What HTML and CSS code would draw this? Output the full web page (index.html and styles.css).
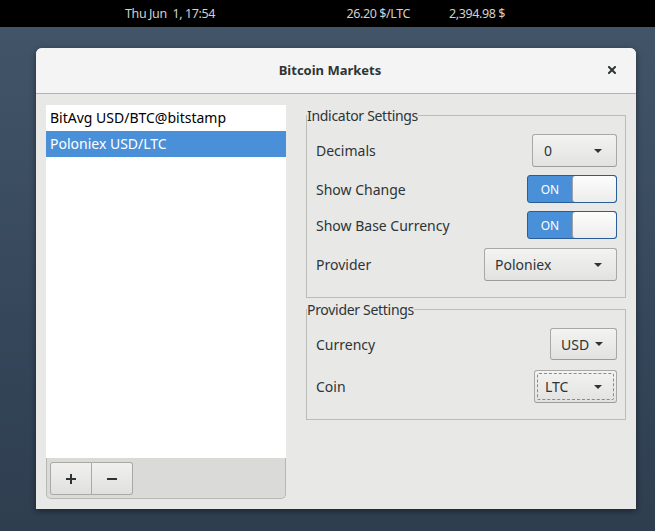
FILE: index.html
```html
<!DOCTYPE html>
<html lang="en">
<head>
<meta charset="utf-8">
<title>Bitcoin Markets</title>
<link rel="stylesheet" href="styles.css">
</head>
<body>
<div class="topbar">
  <span class="clock">Thu Jun  1, 17:54</span>
  <span class="ticker ticker-ltc">26.20 $/LTC</span>
  <span class="ticker">2,394.98 $</span>
</div>
<div class="desktop">
  <div class="dialog">
    <header class="titlebar">
      <span class="title">Bitcoin Markets</span>
      <button class="close" aria-label="Close">
        <svg width="8" height="8" viewBox="0 0 8 8"><path d="M1 1L7 7M7 1L1 7" stroke="#2e3436" stroke-width="2" stroke-linecap="square" fill="none"/></svg>
      </button>
    </header>
    <div class="content">
      <div class="sidebar">
        <ul class="list">
          <li class="row">BitAvg USD/BTC@bitstamp</li>
          <li class="row selected">Poloniex USD/LTC</li>
        </ul>
        <div class="toolbar">
          <div class="btn-group">
            <button class="tool-btn" aria-label="Add">
              <svg width="10" height="10" viewBox="0 0 10 10"><path d="M0 5H10M5 0V10" stroke="#2e3436" stroke-width="2" fill="none"/></svg>
            </button>
            <button class="tool-btn" aria-label="Remove">
              <svg width="10" height="10" viewBox="0 0 10 10"><path d="M0 5H10" stroke="#2e3436" stroke-width="2" fill="none"/></svg>
            </button>
          </div>
        </div>
      </div>
      <div class="settings">
        <fieldset class="frame frame-indicator">
          <legend>Indicator Settings</legend>
          <div class="setting-row">
            <span class="label">Decimals</span>
            <button class="combo combo-decimals"><span>0</span><svg class="arrow" width="8" height="4" viewBox="0 0 8 4"><path d="M0 0H8L4 4Z" fill="#2e3436"/></svg></button>
          </div>
          <div class="setting-row">
            <span class="label">Show Change</span>
            <div class="switch"><span class="switch-on">ON</span><span class="knob"></span></div>
          </div>
          <div class="setting-row">
            <span class="label">Show Base Currency</span>
            <div class="switch"><span class="switch-on">ON</span><span class="knob"></span></div>
          </div>
          <div class="setting-row row-provider">
            <span class="label">Provider</span>
            <button class="combo combo-provider"><span>Poloniex</span><svg class="arrow" width="8" height="4" viewBox="0 0 8 4"><path d="M0 0H8L4 4Z" fill="#2e3436"/></svg></button>
          </div>
        </fieldset>
        <fieldset class="frame frame-provider">
          <legend>Provider Settings</legend>
          <div class="setting-row">
            <span class="label">Currency</span>
            <button class="combo combo-currency"><span>USD</span><svg class="arrow" width="8" height="4" viewBox="0 0 8 4"><path d="M0 0H8L4 4Z" fill="#2e3436"/></svg></button>
          </div>
          <div class="setting-row row-coin">
            <span class="label">Coin</span>
            <button class="combo combo-coin focused"><span>LTC</span><svg class="arrow" width="8" height="4" viewBox="0 0 8 4"><path d="M0 0H8L4 4Z" fill="#2e3436"/></svg></button>
          </div>
        </fieldset>
      </div>
    </div>
  </div>
</div>
</body>
</html>
```
FILE: styles.css
```css
* { box-sizing: border-box; }

html, body {
  margin: 0;
  width: 655px;
  height: 531px;
  overflow: hidden;
}

body {
  font-family: "Noto Sans", "Open Sans", sans-serif;
  font-size: 14px;
  color: #2e3436;
  background: #000;
  display: flex;
  flex-direction: column;
}

.topbar {
  height: 27px;
  flex: none;
  background: #000;
  color: #d0d0d0;
  display: flex;
  align-items: center;
  padding: 0 150px 1px 125px;
  font-size: 12.5px;
  letter-spacing: -0.4px;
}

.clock { white-space: pre; margin-right: auto; }
.ticker-ltc { margin-right: 39px; }

.desktop {
  flex: 1;
  background: linear-gradient(#425568, #35465a 60%, #2f3e4f);
  padding: 21px 0 0 36px;
}

.dialog {
  width: 600px;
  height: 461px;
  display: flex;
  flex-direction: column;
  background: #e8e8e7;
  border-radius: 6px 6px 0 0;
  box-shadow: 0 2px 6px rgba(0, 0, 0, 0.45);
}

.titlebar {
  height: 46px;
  flex: none;
  display: grid;
  grid-template-columns: 1fr auto 1fr;
  align-items: center;
  background: #f4f4f4;
  border-bottom: 1px solid #b3b3b0;
  border-radius: 6px 6px 0 0;
  padding: 0 12px 1px 0;
}

.title {
  grid-column: 2;
  font-size: 13px;
  font-weight: bold;
  color: #2e3436;
}

.close {
  grid-column: 3;
  justify-self: end;
  width: 24px;
  height: 24px;
  border: 0;
  padding: 0;
  background: transparent;
  display: flex;
  align-items: center;
  justify-content: center;
}

.content {
  flex: 1;
  display: flex;
  gap: 20px;
  padding: 11px 10px 10px 10px;
}

.sidebar {
  width: 240px;
  display: flex;
  flex-direction: column;
}

.list {
  flex: 1;
  margin: 0;
  padding: 0;
  list-style: none;
  background: #fff;
}

.row {
  height: 26px;
  line-height: 26px;
  padding-left: 4px;
  color: #000;
}

.row.selected {
  background: #4a90d9;
  color: #fff;
}

.toolbar {
  height: 41px;
  flex: none;
  background: #dadad9;
  border: 1px solid #b8b8b5;
  border-top: 0;
  border-radius: 0 0 5px 5px;
  padding: 4px 3px;
}

.btn-group {
  display: flex;
  height: 33px;
}

.tool-btn {
  width: 42px;
  height: 33px;
  padding: 0;
  border: 1px solid #a8a8a5;
  background: linear-gradient(#f0f0ef, #e0e0df);
  display: flex;
  align-items: center;
  justify-content: center;
}

.tool-btn:first-child { border-radius: 3px 0 0 3px; }
.tool-btn:last-child { border-radius: 0 3px 3px 0; border-left: 0; width: 41px; }

.settings {
  width: 320px;
  display: flex;
  flex-direction: column;
  gap: 3px;
  padding-top: 2px;
}

.frame {
  margin: 0;
  border: 1px solid #bcbcb9;
  padding: 10px 0 16px 0;
  display: flex;
  flex-direction: column;
  gap: 8px;
  min-width: 0;
}

.frame legend {
  padding: 0;
  line-height: 17px;
  letter-spacing: -0.3px;
  color: #2e3436;
}

.frame-provider { padding-top: 10px; padding-bottom: 16px; gap: 10px; }

.setting-row {
  display: flex;
  align-items: center;
  justify-content: space-between;
  padding: 0 8px 0 9px;
}

.row-provider { margin-top: 1px; }

.label { color: #2e3436; }

.combo {
  height: 33px;
  display: flex;
  align-items: center;
  justify-content: space-between;
  padding: 0 14px 0 10px;
  border: 1px solid #a8a8a5;
  border-bottom-color: #9c9c99;
  border-radius: 3px;
  background: linear-gradient(#f3f3f2, #e2e2e1);
  font: inherit;
  color: #2e3436;
}

.combo-decimals { width: 85px; padding-left: 11px; }
.combo-provider { width: 133px; }
.combo-currency { width: 67px; height: 32px; padding-right: 13px; }
.combo-coin { width: 83px; padding-left: 10px; }

.combo.focused { position: relative; }
.combo.focused::after {
  content: "";
  position: absolute;
  inset: 2px;
  border: 1px dashed #8a8a88;
  border-radius: 2px;
}

.arrow { display: block; }

.switch {
  width: 90px;
  height: 28px;
  display: flex;
  border: 1px solid #2a5d98;
  border-radius: 3px;
  background: #4a90d9;
  overflow: hidden;
}

.switch-on {
  width: 44px;
  display: flex;
  align-items: center;
  justify-content: center;
  color: #fff;
  font-size: 12px;
}

.knob {
  flex: 1;
  background: linear-gradient(#fdfdfd, #ececeb);
  border-left: 1px solid #9fa3a8;
  border-radius: 3px;
}
```
